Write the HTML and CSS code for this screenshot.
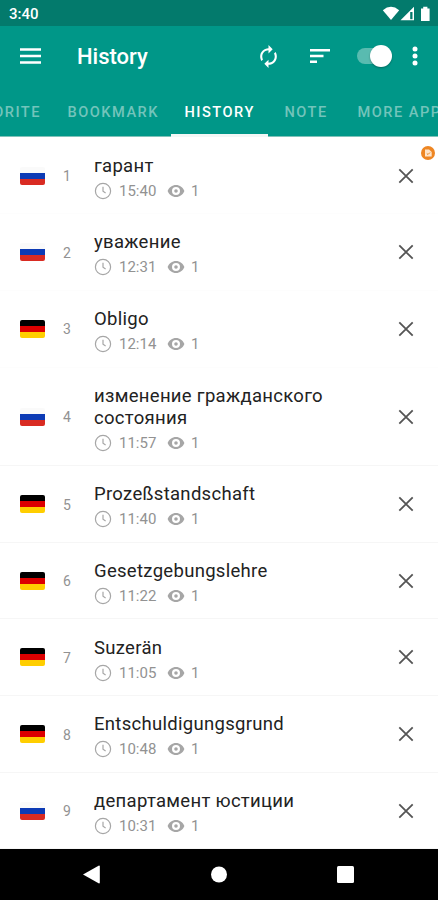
FILE: index.html
```html
<!DOCTYPE html>
<html lang="en">
<head>
<meta charset="utf-8">
<title>History</title>
<link rel="stylesheet" href="styles.css">
</head>
<body>
<svg class="defs" width="0" height="0">
  <symbol id="clock" viewBox="0 0 18 18"><circle cx="9" cy="9" r="7.6"/><path d="M9 4.8V9.3L11.6 11"/></symbol>
  <symbol id="eye" viewBox="0 0 18 14"><path fill-rule="evenodd" d="M9 1C5.200 1 2 3.400.6 7 2 10.600 5.200 13 9 13s7-2.400 8.400-6C16 3.400 12.800 1 9 1zM9 11a4 4 0 1 1 0-8 4 4 0 0 1 0 8zM9 5.200a1.800 1.800 0 1 0 0 3.600 1.800 1.800 0 0 0 0-3.600z"/></symbol>
  <symbol id="close" viewBox="0 0 16 16"><path d="M1.300 1.300 14.700 14.700M14.700 1.300 1.300 14.700"/></symbol>
</svg>
<div class="screen">
  <header class="statusbar">
    <span class="time">3:40</span>
    <svg class="status-icons" width="50" height="16" viewBox="0 0 50 16">
      <path d="M.8 4.200Q9-2.500 17.200 4.200L9 14z"/>
      <path d="M18.500 14.300 32 .8V14.300z"/><path class="signal-gap" d="M28.200 6h2.300v7.200h-2.300z"/>
      <path d="M39 2.500h2.200V.8h4.200v1.700h2.200V15H39z"/>
    </svg>
  </header>
  <div class="toolbar">
    <svg class="menu" width="21" height="16" viewBox="0 0 21 16"><path d="M0 1.500h21M0 8h21M0 14.500h21"/></svg>
    <h1>History</h1>
    <svg class="sync" width="25" height="25" viewBox="0 0 24 24"><path d="M12 6v3l4-4-4-4v3c-4.420 0-8 3.580-8 8 0 1.570.46 3.030 1.240 4.260L6.700 14.800A5.870 5.870 0 0 1 6 12c0-3.310 2.690-6 6-6zm6.760 1.740L17.300 9.200c.44.840.7 1.790.7 2.800 0 3.310-2.690 6-6 6v-3l-4 4 4 4v-3c4.420 0 8-3.580 8-8 0-1.570-.46-3.030-1.240-4.260z"/></svg>
    <svg class="sort" width="20" height="14" viewBox="0 0 20 14"><path d="M0 1.200h20M0 7h13.500M0 12.800h7"/></svg>
    <div class="switch"><span class="thumb"></span></div>
    <svg class="more" width="6" height="20" viewBox="0 0 6 20"><circle cx="3" cy="3" r="2.500"/><circle cx="3" cy="10" r="2.500"/><circle cx="3" cy="17" r="2.500"/></svg>
  </div>
  <nav class="tabs">
    <span class="tab favorite">FAVORITE</span>
    <span class="tab bookmark">BOOKMARK</span>
    <span class="tab history active">HISTORY</span>
    <span class="tab note">NOTE</span>
    <span class="tab apps">MORE APPS</span>
  </nav>
  <main class="list">
    <svg class="badge" width="14" height="14" viewBox="0 0 14 14"><circle cx="7" cy="7" r="7"/><path class="doc" d="M4 3.500h4l2.700 2.500v4.500H4z"/><path class="mark" d="M5.800 7.500l1.200 1 2-2"/></svg>
    <article class="row faint"><i class="flag ru"></i><span class="num">1</span><div class="entry"><h2>гарант</h2><p class="meta"><svg class="clock"><use href="#clock"/></svg><span class="at">15:40</span><svg class="eye"><use href="#eye"/></svg><span>1</span></p></div><svg class="close"><use href="#close"/></svg></article>
    <article class="row faint"><i class="flag ru"></i><span class="num">2</span><div class="entry"><h2>уважение</h2><p class="meta"><svg class="clock"><use href="#clock"/></svg><span class="at">12:31</span><svg class="eye"><use href="#eye"/></svg><span>1</span></p></div><svg class="close"><use href="#close"/></svg></article>
    <article class="row faint"><i class="flag de"></i><span class="num">3</span><div class="entry"><h2>Obligo</h2><p class="meta"><svg class="clock"><use href="#clock"/></svg><span class="at">12:14</span><svg class="eye"><use href="#eye"/></svg><span>1</span></p></div><svg class="close"><use href="#close"/></svg></article>
    <article class="row"><i class="flag ru"></i><span class="num">4</span><div class="entry"><h2>изменение гражданского<br>состояния</h2><p class="meta"><svg class="clock"><use href="#clock"/></svg><span class="at">11:57</span><svg class="eye"><use href="#eye"/></svg><span>1</span></p></div><svg class="close"><use href="#close"/></svg></article>
    <article class="row"><i class="flag de"></i><span class="num">5</span><div class="entry"><h2>Prozeßstandschaft</h2><p class="meta"><svg class="clock"><use href="#clock"/></svg><span class="at">11:40</span><svg class="eye"><use href="#eye"/></svg><span>1</span></p></div><svg class="close"><use href="#close"/></svg></article>
    <article class="row"><i class="flag de"></i><span class="num">6</span><div class="entry"><h2>Gesetzgebungslehre</h2><p class="meta"><svg class="clock"><use href="#clock"/></svg><span class="at">11:22</span><svg class="eye"><use href="#eye"/></svg><span>1</span></p></div><svg class="close"><use href="#close"/></svg></article>
    <article class="row"><i class="flag de"></i><span class="num">7</span><div class="entry"><h2>Suzerän</h2><p class="meta"><svg class="clock"><use href="#clock"/></svg><span class="at">11:05</span><svg class="eye"><use href="#eye"/></svg><span>1</span></p></div><svg class="close"><use href="#close"/></svg></article>
    <article class="row"><i class="flag de"></i><span class="num">8</span><div class="entry"><h2>Entschuldigungsgrund</h2><p class="meta"><svg class="clock"><use href="#clock"/></svg><span class="at">10:48</span><svg class="eye"><use href="#eye"/></svg><span>1</span></p></div><svg class="close"><use href="#close"/></svg></article>
    <article class="row"><i class="flag ru"></i><span class="num">9</span><div class="entry"><h2>департамент юстиции</h2><p class="meta"><svg class="clock"><use href="#clock"/></svg><span class="at">10:31</span><svg class="eye"><use href="#eye"/></svg><span>1</span></p></div><svg class="close"><use href="#close"/></svg></article>
  </main>
  <footer class="navbar">
    <svg width="17" height="19" viewBox="0 0 17 19"><path d="M0 9.500 16 .5q.8 0 .8 1v16q0 1-.8 1z"/></svg>
    <svg width="17" height="17" viewBox="0 0 17 17"><circle cx="9" cy="8.500" r="8"/></svg>
    <svg width="17" height="17" viewBox="0 0 17 17"><rect width="17" height="17" rx="1.500"/></svg>
  </footer>
</div>
</body>
</html>
```
FILE: styles.css
```css
* { box-sizing: border-box; }
body { margin: 0; background: #fff; font-family: Roboto, sans-serif; }
h1, h2, p { margin: 0; font-weight: 400; }
svg { display: block; flex: none; }
.defs { position: absolute; }
.screen { width: 438px; height: 900px; display: flex; flex-direction: column; overflow: hidden; }

.statusbar { height: 26px; flex: none; background: #037a6c; color: #fff; display: flex; justify-content: space-between; align-items: center; padding: 2px 8px 0 9px; }
.time { font-size: 15px; font-weight: 500; }
.status-icons { margin-right: -2px; fill: #fff; }
.signal-gap { fill: #037a6c; }

.toolbar { height: 60px; flex: none; background: #009788; display: flex; align-items: center; padding: 0 0 0 20px; color: #fff; fill: #fff; }
.menu, .sort { stroke: #fff; stroke-width: 2.6; }
.toolbar h1 { width: 179px; flex: none; margin-left: 36px; font-size: 22px; line-height: 26px; font-weight: 500; padding-top: 1px; }
.sort { margin-left: 29px; stroke-width: 2.4; }
.switch { width: 34px; height: 16px; margin-left: 27px; border-radius: 8px; background: #59bbb0; display: flex; align-items: center; justify-content: flex-end; flex: none; }
.thumb { width: 22px; height: 22px; margin-right: -1px; border-radius: 50%; background: #fff; box-shadow: 0 1px 2px rgba(0, 0, 0, .3); flex: none; }
.more { margin-left: 21px; }

.tabs { height: 51px; flex: none; background: linear-gradient(#009788 50px, #80c2b9 50px); display: flex; overflow: hidden; }
.tab { flex: none; padding: 17px 0 0 13.5px; font-size: 14.6px; line-height: 18px; font-weight: 500; letter-spacing: 1.5px; color: #73c4bb; white-space: nowrap; }
.favorite { width: 104px; margin-left: -50px; }
.bookmark { width: 117px; }
.history { width: 97px; }
.note { width: 76px; padding-left: 16.5px; }
.apps { width: 120px; }
.active { color: #fff; border-bottom: 3px solid #f3f7f6; }

.list { flex: 1; position: relative; padding-top: .6px; overflow: hidden; }
.badge { position: absolute; top: 9px; right: 3px; fill: #ee8623; }
.badge .doc { fill: #fde5cb; }
.badge .mark { fill: none; stroke: #ee8623; }
.row { display: flex; align-items: center; padding: 16px 24px 15.65px 20px; border-bottom: 1px solid #f6f6f6; }
.faint { border-bottom-color: #fdfdfd; }
.flag { width: 25px; height: 18px; flex: none; border-radius: 2px; }
.ru { background: linear-gradient(#fafafa 33.3%, #0d3bb5 33.3% 66.6%, #d92b22 66.6%); }
.de { background: linear-gradient(#000 33.3%, #dc0000 33.3% 66.6%, #ffce00 66.6%); }
.num { width: 43px; margin-left: 6px; padding: 1px 11px 0 0; text-align: center; font-size: 14px; color: #929292; }
.entry { flex: 1; padding-top: 1.2px; margin-bottom: -1.2px; }
.entry h2 { font-size: 18.5px; line-height: 22px; letter-spacing: .3px; color: #222; white-space: nowrap; }
.meta { display: flex; align-items: center; height: 22px; padding-top: 6px; font-size: 15px; color: #929292; }
.clock { width: 18px; height: 18px; fill: none; stroke: #a6a6a6; stroke-width: 1.2; }
.at { width: 48px; margin-left: 7px; }
.eye { width: 18px; height: 14px; margin-right: 6px; fill: #a6a6a6; }
.close { width: 16px; height: 16px; stroke: #555; stroke-width: 1.8; }

.navbar { height: 51px; flex: none; background: #000; fill: #fff; display: flex; align-items: center; justify-content: space-between; padding: 0 84px 0 83px; }
```
